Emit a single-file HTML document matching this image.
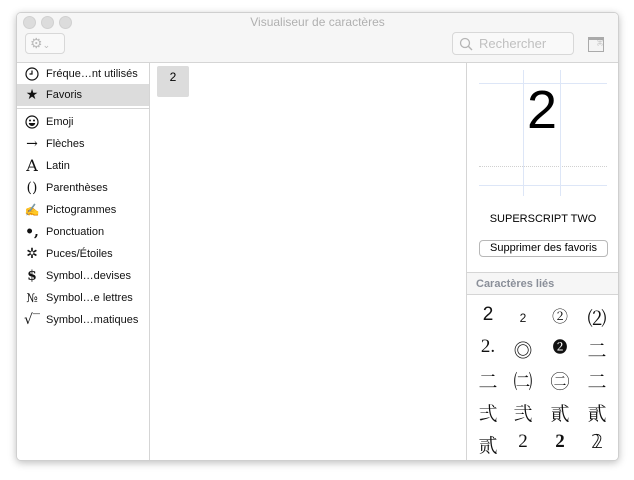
<!DOCTYPE html>
<html><head><meta charset="utf-8"><style>
body{margin:0;width:634px;height:480px;background:#fff;font-family:"Liberation Sans","Noto Sans CJK JP",sans-serif;position:relative;overflow:hidden}
.win{position:absolute;left:16px;top:12px;width:601px;height:447px;background:#fff;border:1px solid #cfcfcf;border-radius:5px;box-shadow:0 2px 8px rgba(0,0,0,.25);overflow:hidden}
.tb{position:absolute;left:0;top:0;width:601px;height:49px;background:#f6f6f6;border-bottom:1px solid #d5d5d5}
.dot{position:absolute;top:3px;width:11px;height:11px;border-radius:50%;background:#dcdcdc;border:1px solid #d0d0d0}
.title{position:absolute;top:2px;left:0;width:601px;text-align:center;font-size:12px;color:#b0b0b0}
.side{position:absolute;left:0;top:50px;width:132px;height:397px;background:#fff;border-right:1px solid #d5d5d5}
.it{position:absolute;left:0;width:132px;height:22px;font-size:11px;color:#111;line-height:22px}
.it .ic{position:absolute;left:6px;width:18px;text-align:center;font-family:"DejaVu Serif",serif;font-size:14px}
.it .t{position:absolute;left:29px}
.rp{position:absolute;left:449px;top:50px;width:152px;height:397px;border-left:1px solid #d5d5d5;background:#fff}
.g{position:absolute;font-family:"Liberation Serif","Noto Serif CJK SC",serif;font-size:19px;width:36px;text-align:center;color:#111}
</style></head><body>
<div class="win">
 <div class="tb">
  <div class="dot" style="left:6px"></div><div class="dot" style="left:24px"></div><div class="dot" style="left:42px"></div>
  <div class="title">Visualiseur de caractères</div>
  <div style="position:absolute;left:8px;top:20px;width:34px;height:19px;border:1px solid #d8d8d8;border-radius:4px;background:#f9f9f9;color:#bbb;font-size:14px;line-height:18px;padding-left:4px">⚙<span style="font-size:9px">⌄</span></div>
  <div style="position:absolute;left:435px;top:19px;width:120px;height:21px;border:1px solid #d8d8d8;border-radius:4px;background:#f9f9f9;color:#c0c0c0;font-size:13px;line-height:21px">
   <svg style="position:absolute;left:6px;top:4px" width="14" height="14" viewBox="0 0 14 14"><circle cx="6" cy="6" r="4.5" fill="none" stroke="#b5b5b5" stroke-width="1.3"/><path d="M9.3 9.3L13 13" stroke="#b5b5b5" stroke-width="1.4"/></svg>
   <span style="position:absolute;left:26px">Rechercher</span></div>
  <div style="position:absolute;left:571px;top:24px;width:14px;height:11px;border:1px solid #aaa;border-top:3px solid #aaa;background:#f4f4f4;font-size:6px;color:#999;text-align:right;line-height:9px">⌘</div>
 </div>
 <div class="side">
  <div class="it" style="top:0"><svg style="position:absolute;left:8px;top:4px" width="14" height="14" viewBox="0 0 14 14"><circle cx="7" cy="7" r="6" fill="none" stroke="#111" stroke-width="1.2"/><path d="M7 3.5V7H4.5" fill="none" stroke="#111" stroke-width="1.2"/></svg><span class="t">Fréque…nt utilisés</span></div>
  <div class="it" style="top:21px;background:#dcdcdc"><span class="ic">★</span><span class="t">Favoris</span></div>
  <div style="position:absolute;left:0;top:45px;width:132px;border-top:1px solid #d5d5d5"></div>
  <div class="it" style="top:48px"><svg style="position:absolute;left:8px;top:4px" width="14" height="14" viewBox="0 0 14 14"><circle cx="7" cy="7" r="6" fill="none" stroke="#111" stroke-width="1.2"/><circle cx="5" cy="5.5" r="1" fill="#111"/><circle cx="9" cy="5.5" r="1" fill="#111"/><path d="M3.8 8h6.4a3.2 3 0 0 1-6.4 0z" fill="#111"/></svg><span class="t">Emoji</span></div>
  <div class="it" style="top:70px"><span class="ic">→</span><span class="t">Flèches</span></div>
  <div class="it" style="top:92px"><span class="ic" style="font-size:16px">A</span><span class="t">Latin</span></div>
  <div class="it" style="top:114px"><span class="ic">()</span><span class="t">Parenthèses</span></div>
  <div class="it" style="top:136px"><span class="ic" style="font-size:12px;color:#333">✍</span><span class="t">Pictogrammes</span></div>
  <div class="it" style="top:158px"><span class="ic" style="font-weight:bold">•,</span><span class="t">Ponctuation</span></div>
  <div class="it" style="top:180px"><span class="ic">✲</span><span class="t">Puces/Étoiles</span></div>
  <div class="it" style="top:202px"><span class="ic" style="font-weight:bold">$</span><span class="t">Symbol…devises</span></div>
  <div class="it" style="top:224px"><span class="ic" style="font-size:12px">№</span><span class="t">Symbol…e lettres</span></div>
  <div class="it" style="top:246px"><span class="ic">√‾</span><span class="t">Symbol…matiques</span></div>
 </div>
 <div style="position:absolute;left:140px;top:53px;width:32px;height:31px;background:#dcdcdc;border-radius:2px;font-size:12px;text-align:center;line-height:22px">2</div>
 <div class="rp">
  <div style="position:absolute;left:12px;top:20px;width:128px;border-top:1px solid #dde6f7"></div>
  <div style="position:absolute;left:12px;top:103px;width:128px;border-top:1px dotted #d0d0d0"></div>
  <div style="position:absolute;left:12px;top:122px;width:128px;border-top:1px solid #dde6f7"></div>
  <div style="position:absolute;left:56px;top:7px;height:126px;border-left:1px solid #dde6f7"></div>
  <div style="position:absolute;left:93px;top:7px;height:126px;border-left:1px solid #dde6f7"></div>
  <div style="position:absolute;left:40px;top:15px;width:70px;text-align:center;font-size:54px;line-height:64px">2</div>
  <div style="position:absolute;left:0;top:150px;width:152px;text-align:center;font-size:11px">SUPERSCRIPT TWO</div>
  <div style="position:absolute;left:12px;top:177px;width:127px;height:15px;border:1px solid #b8b8b8;border-radius:4px;font-size:11px;text-align:center;line-height:15px">Supprimer des favoris</div>
  <div style="position:absolute;left:0;top:209px;width:152px;height:23px;background:#f6f6f6;border-top:1px solid #d5d5d5;border-bottom:1px solid #d5d5d5;font-size:11px;font-weight:bold;color:#8a8f99;line-height:23px;padding-left:9px;box-sizing:border-box">Caractères liés</div>
  <div class="g" style="left:3px;top:241px;font-family:'Liberation Sans',sans-serif">2</div>
  <div class="g" style="left:38px;top:248px;font-size:12px;font-family:'Liberation Sans',sans-serif">2</div>
  <div class="g" style="left:75px;top:241px;font-size:16px">②</div>
  <div class="g" style="left:112px;top:241px">⑵</div>
  <div class="g" style="left:3px;top:273px">2.</div>
  <div class="g" style="left:38px;top:273px">◎</div>
  <div class="g" style="left:75px;top:273px;font-size:15px">❷</div>
  <div class="g" style="left:112px;top:273px">二</div>
  <div class="g" style="left:3px;top:304px">二</div>
  <div class="g" style="left:38px;top:304px">㈡</div>
  <div class="g" style="left:75px;top:304px">㊁</div>
  <div class="g" style="left:112px;top:304px">二</div>
  <div class="g" style="left:3px;top:336px">弍</div>
  <div class="g" style="left:38px;top:336px">弐</div>
  <div class="g" style="left:75px;top:336px">貳</div>
  <div class="g" style="left:112px;top:336px">貳</div>
  <div class="g" style="left:3px;top:368px">贰</div>
  <div class="g" style="left:38px;top:368px">2</div>
  <div class="g" style="left:75px;top:368px;font-weight:bold">2</div>
  <div class="g" style="left:112px;top:368px">𝟚</div>
 </div>
</div>
</body></html>
